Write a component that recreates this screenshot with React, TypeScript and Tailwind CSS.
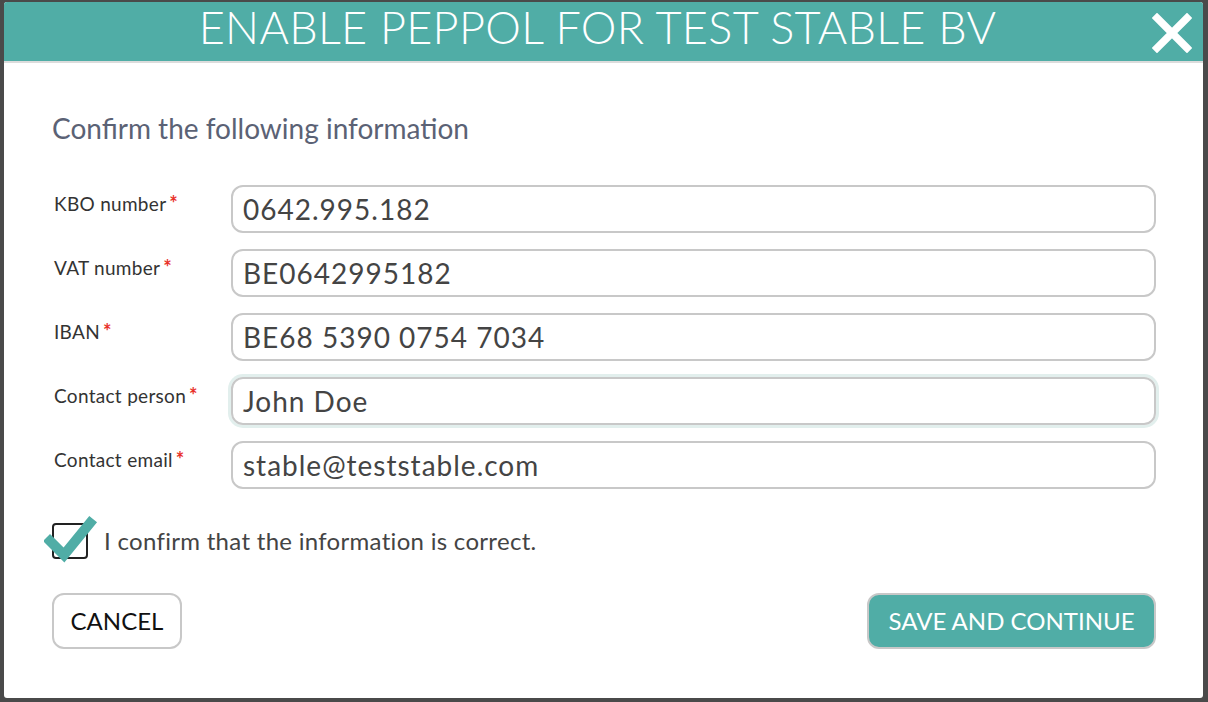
import React from "react";

const fields = [
  { label: "KBO number", value: "0642.995.182" },
  { label: "VAT number", value: "BE0642995182" },
  { label: "IBAN", value: "BE68 5390 0754 7034" },
  { label: "Contact person", value: "John Doe", focus: true },
  { label: "Contact email", value: "stable@teststable.com" },
];

export default function App() {
  return (
    <div
      className="w-[1208px] h-[702px] bg-[#4a4a4a] pl-[4px] pr-[5px] pt-[2px] pb-[4px]"
      style={{ fontFamily: "Lato, 'Open Sans', sans-serif" }}
    >
      <div className="h-full bg-white rounded-[3px] flex flex-col">
        {/* HEADER */}
        <header className="relative h-[61px] bg-[#50ada6] rounded-t-[3px] border-b-2 border-[#dcdcdc] flex items-start justify-center pr-[12px]">
          <h1 className="text-white text-[45px] font-light leading-[54px] tracking-[0.3px] -mt-[2px]">
            ENABLE PEPPOL FOR TEST STABLE BV
          </h1>
          <button className="absolute right-[11px] top-[11px] w-[40px] h-[40px] flex items-center justify-center">
            <svg width="40" height="40" viewBox="0 0 40 40">
              <path d="M5 5 L35 35 M35 5 L5 35" stroke="white" strokeWidth="7.5" strokeLinecap="square" />
            </svg>
          </button>
        </header>

        {/* BODY */}
        <div className="flex-1 pl-[48px] pr-[47px] pt-[51px]">
          <h2 className="text-[28px] text-[#5b6275] leading-none">Confirm the following information</h2>

          <div className="mt-[43px] flex flex-col gap-[16px]">
            {fields.map((f) => (
              <div key={f.label} className="flex items-start">
                <label className="w-[179px] pl-[2px] pt-[7px] text-[19px] tracking-[0.3px] text-[#333] leading-[22px]">
                  {f.label}
                  <span className="text-[#e8312a] text-[20px] font-bold ml-[3px]">*</span>
                </label>
                <div
                  className={`flex-1 h-[48px] rounded-[12px] border-2 border-[#c8c8c8] flex items-center px-[10px] ${
                    f.focus ? "shadow-[0_0_0_3px_#e2efed]" : ""
                  }`}
                >
                  <span className="text-[28px] text-[#444] leading-none tracking-[1px] tabular-nums">{f.value}</span>
                </div>
              </div>
            ))}
          </div>

          {/* CONFIRM */}
          <div className="mt-[34px] flex items-center gap-[16px]">
            <div className="relative w-[36px] h-[36px] border-2 border-[#222] rounded-[4px]">
              <svg className="absolute left-[-10px] top-[-10px]" width="56" height="50" viewBox="0 0 56 50">
                <path d="M6 26 L20 40 L46 8" stroke="#50ada6" strokeWidth="10" fill="none" strokeLinecap="square" />
              </svg>
            </div>
            <span className="text-[24px] text-[#444] leading-none tracking-[0.3px]">
              I confirm that the information is correct.
            </span>
          </div>

          {/* ACTIONS */}
          <div className="mt-[34px] flex justify-between">
            <button className="w-[130px] h-[56px] rounded-[12px] border-2 border-[#c8c8c8] text-[24px] text-[#111] bg-white">
              CANCEL
            </button>
            <button className="w-[289px] h-[56px] rounded-[12px] border-2 border-[#c8c8c8] text-[24px] text-white bg-[#50ada6]">
              SAVE AND CONTINUE
            </button>
          </div>
        </div>
      </div>
    </div>
  );
}
